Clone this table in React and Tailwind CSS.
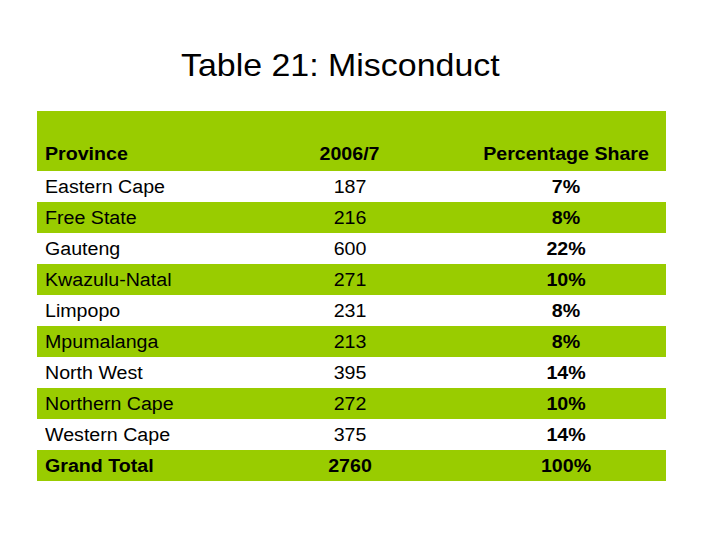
import React from "react";

const rows = [
  ["Eastern Cape", "187", "7%"],
  ["Free State", "216", "8%"],
  ["Gauteng", "600", "22%"],
  ["Kwazulu-Natal", "271", "10%"],
  ["Limpopo", "231", "8%"],
  ["Mpumalanga", "213", "8%"],
  ["North West", "395", "14%"],
  ["Northern Cape", "272", "10%"],
  ["Western Cape", "375", "14%"],
];

function Row({ cells, green, bold }) {
  return (
    <div
      className={`grid grid-cols-[197px_232px_200px] h-[31px] pt-[2px] leading-[29px] text-[18px] ${
        green ? "bg-[#99cc00]" : "bg-white"
      }`}
    >
      <div className="pl-[8px]">
        <span className={`inline-block origin-left scale-x-[1.09] ${bold ? "font-bold" : ""}`}>{cells[0]}</span>
      </div>
      <div className="text-center">
        <span className={`inline-block scale-x-[1.09] ${bold ? "font-bold" : ""}`}>{cells[1]}</span>
      </div>
      <div className="text-center">
        <span className="inline-block scale-x-[1.09] font-bold">{cells[2]}</span>
      </div>
    </div>
  );
}

export default function App() {
  return (
    <div className="w-[720px] h-[540px] bg-white text-black font-['Liberation_Sans',Arial,sans-serif]">
      <div className="pt-[49px] pr-[39px] h-[111px] text-center leading-none text-[32px]">
        <span className="inline-block scale-x-[1.06]">Table 21: Misconduct</span>
      </div>
      <div className="ml-[37px] w-[629px]">
        <div className="grid grid-cols-[197px_232px_200px] h-[60px] pt-[29px] leading-[29px] text-[18px] font-bold bg-[#99cc00]">
          <div className="pl-[8px]">
            <span className="inline-block origin-left scale-x-[1.09]">Province</span>
          </div>
          <div className="text-center">
            <span className="inline-block scale-x-[1.09]">2006/7</span>
          </div>
          <div className="text-center">
            <span className="inline-block scale-x-[1.09]">Percentage Share</span>
          </div>
        </div>
        {rows.map((r, i) => (
          <Row key={r[0]} cells={r} green={i % 2 === 1} />
        ))}
        <Row cells={["Grand Total", "2760", "100%"]} green bold />
      </div>
    </div>
  );
}
